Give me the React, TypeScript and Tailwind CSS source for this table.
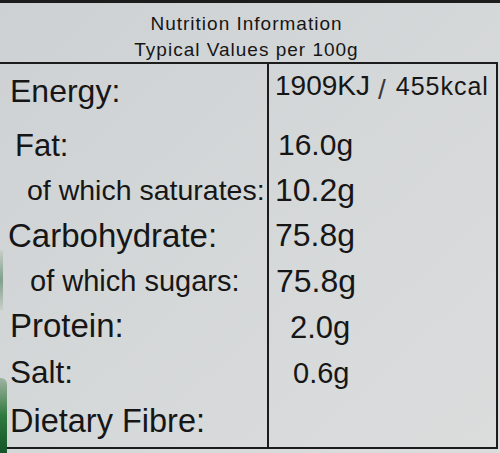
type Row = {
  label: string;
  value: string;
  rowClass: string;
  labelClass: string;
  valueClass: string;
};

const rows: Row[] = [
  {
    label: 'Fat:',
    value: '16.0g',
    rowClass: 'h-[50px]',
    labelClass: 'pl-[15px] text-[31px] translate-y-[2px]',
    valueClass: 'pl-[9px] text-[30px] translate-y-[2px]',
  },
  {
    label: 'of which saturates:',
    value: '10.2g',
    rowClass: 'h-[44px]',
    labelClass: 'pl-[27px] text-[28.5px]',
    valueClass: 'pl-[6px] text-[32px]',
  },
  {
    label: 'Carbohydrate:',
    value: '75.8g',
    rowClass: 'h-[46px]',
    labelClass: 'pl-[8px] text-[33px]',
    valueClass: 'pl-[6px] text-[32px]',
  },
  {
    label: 'of which sugars:',
    value: '75.8g',
    rowClass: 'h-[46px]',
    labelClass: 'pl-[30px] text-[29px]',
    valueClass: 'pl-[7px] text-[32px]',
  },
  {
    label: 'Protein:',
    value: '2.0g',
    rowClass: 'h-[46px]',
    labelClass: 'pl-[10px] text-[33px] -translate-y-[2px]',
    valueClass: 'pl-[21px] text-[31px]',
  },
  {
    label: 'Salt:',
    value: '0.6g',
    rowClass: 'h-[46px]',
    labelClass: 'pl-[10px] text-[31.5px]',
    valueClass: 'pl-[24px] text-[29px]',
  },
  {
    label: 'Dietary Fibre:',
    value: '',
    rowClass: 'h-[51px]',
    labelClass: 'pl-[10px] text-[32.5px]',
    valueClass: '',
  },
];

const NutritionLabel = () => {
  return (
    <div
      className="relative w-[500px] h-[453px] overflow-hidden bg-linear-to-br from-[#cdd1d3] via-[#d5d8d9] to-[#dbdddd] text-[#161616]"
      style={{ fontFamily: '"Liberation Sans", Arial, sans-serif' }}
    >
      {/* header */}
      <div className="h-[62px] border-t-[3px] border-[#1c1c1c] flex flex-col items-center pt-[11px] pr-[7px]">
        <div className="text-[19px] leading-none tracking-[1px]">Nutrition Information</div>
        <div className="mt-[7px] text-[19px] leading-none tracking-[1px]">Typical Values per 100g</div>
      </div>

      {/* table */}
      <div className="w-[498px] border-t-2 border-b-2 border-r-2 border-[#1c1c1c]">
        <div className="flex h-[54px]">
          <div className="w-[269px] border-r-2 border-[#1c1c1c] flex items-center">
            <span className="pl-[10px] text-[32px] leading-none">Energy:</span>
          </div>
          <div className="flex-1 flex items-center pb-[10px] pl-[6px]">
            <span className="text-[28px] leading-none">1909KJ</span>
            <span className="ml-[8px] text-[28px] leading-none text-[#3a3a3a] translate-y-[4px]">/</span>
            <span className="ml-[10px] text-[25px] leading-none tracking-[1px]">455kcal</span>
          </div>
        </div>
        {rows.map((row) => (
          <div key={row.label} className={`flex ${row.rowClass}`}>
            <div className="w-[269px] border-r-2 border-[#1c1c1c] flex items-center">
              <span className={`leading-none whitespace-nowrap ${row.labelClass}`}>{row.label}</span>
            </div>
            <div className="flex-1 flex items-center">
              <span className={`leading-none ${row.valueClass}`}>{row.value}</span>
            </div>
          </div>
        ))}
      </div>

      {/* green packaging peeking out at the lower left */}
      <div className="absolute left-0 bottom-0 w-[7px] h-[75px] rounded-tr-[6px] bg-linear-to-b from-[#9fb3a4] via-[#2f7a3e] to-[#14552a]" />
      <div className="absolute left-0 top-[250px] w-[3px] h-[60px] bg-linear-to-b from-[#c8cfca] via-[#7fa08a] to-[#c8cfca]" />
    </div>
  );
};

export default function App() {
  return <NutritionLabel />;
}
